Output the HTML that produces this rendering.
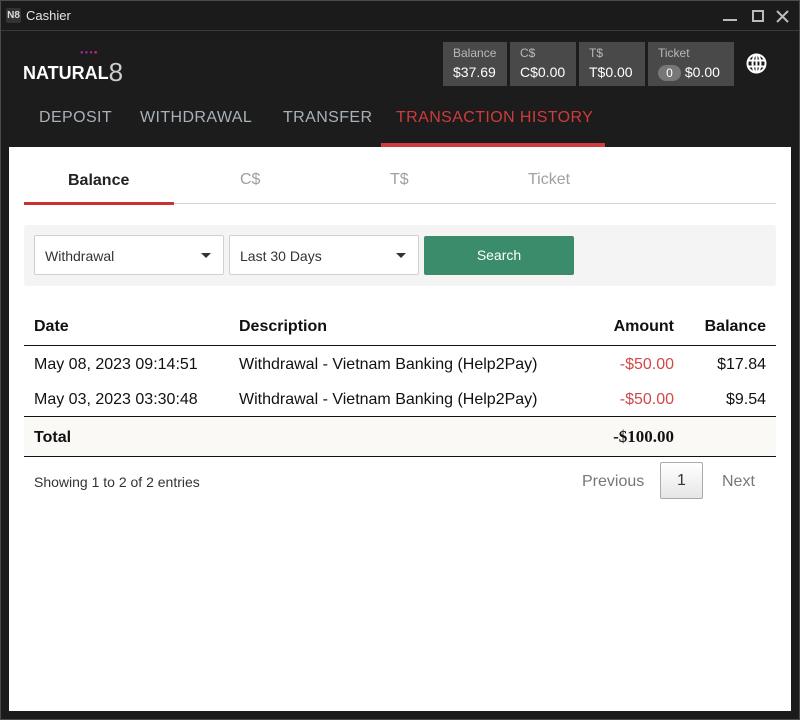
<!DOCTYPE html>
<html><head><style>
*{margin:0;padding:0;box-sizing:border-box}
body{width:800px;height:720px;background:#1b1b1b;font-family:"Liberation Sans",sans-serif;position:relative;overflow:hidden}
.a{position:absolute}
.frame{left:0;top:0;width:800px;height:720px;border:1px solid #4a4a4a}
.tb{left:1px;top:1px;width:798px;height:30px;background:#1b1b1b;border-bottom:1px solid #3a3a3a}
.tab{top:109px;font-size:16px;color:#a9b1b8;letter-spacing:.4px}
.box{top:42px;height:44px;background:#494949;color:#fff}
.box .l{position:absolute;left:10px;top:4px;font-size:12px;color:#b8b8b8}
.box .v{position:absolute;left:10px;top:22px;font-size:14px}
.white{left:9px;top:147px;width:782px;height:564px;background:#fff}
.st{top:171px;font-size:16px;color:#a0a0a0}
.td{font-size:16px;color:#111}
.th{font-size:16px;color:#111;font-weight:bold}
</style></head><body>
<div class="a frame"></div>
<div class="a tb"></div>
<div class="a" style="left:6px;top:8px;width:15px;height:15px;background:#333;border-radius:2px;color:#ddd;font-size:10px;font-weight:bold;line-height:15px;text-align:center">N8</div>
<div class="a" style="left:26px;top:8px;color:#e6e6e6;font-size:13px">Cashier</div>
<div class="a" style="left:723px;top:19px;width:14px;height:2px;background:#bbb"></div>
<div class="a" style="left:752px;top:10px;width:12px;height:12px;border:2px solid #bbb"></div>
<svg class="a" style="left:776px;top:10px" width="13" height="13" stroke="#bbb" stroke-width="2"><path d="M1 1L12 12M12 1L1 12"/></svg>
<div class="a" style="left:9px;top:38px;width:782px;height:109px;background:#1c1c1c"></div>
<div class="a" style="left:23px;top:55px;color:#fff;font-size:18px;font-weight:bold;letter-spacing:0px;transform:scaleX(1.0);transform-origin:left">NATURAL<span style="font-size:26px;font-weight:normal;color:#ccc;position:relative;top:2px">8</span></div>
<div class="a" style="left:80px;top:50px;color:#a0279a;font-size:6px;letter-spacing:1px">●●●<span style="color:#e0266a">●</span></div>
<div class="a box" style="left:443px;width:64px"><span class="l">Balance</span><span class="v">$37.69</span></div>
<div class="a box" style="left:510px;width:66px"><span class="l">C$</span><span class="v">C$0.00</span></div>
<div class="a box" style="left:579px;width:66px"><span class="l">T$</span><span class="v">T$0.00</span></div>
<div class="a box" style="left:648px;width:86px"><span class="l">Ticket</span><span class="v"><span style="display:inline-block;background:#777;border-radius:9px;width:23px;height:16px;text-align:center;font-size:12px;line-height:16px">0</span> $0.00</span></div>
<svg class="a" style="left:746px;top:53px" width="21" height="21" viewBox="0 0 21 21" fill="none" stroke="#fff" stroke-width="2"><circle cx="10.5" cy="10.5" r="9"/><ellipse cx="10.5" cy="10.5" rx="4" ry="9"/><path d="M2 7.5h17M2 13.5h17M10.5 1.5v18"/></svg>
<div class="a tab" style="left:39px">DEPOSIT</div>
<div class="a tab" style="left:140px">WITHDRAWAL</div>
<div class="a tab" style="left:283px">TRANSFER</div>
<div class="a tab" style="left:396px;color:#d03b3b">TRANSACTION HISTORY</div>
<div class="a" style="left:381px;top:143px;width:224px;height:4px;background:#d03b3b"></div>
<div class="a white"></div>
<div class="a st" style="left:68px;top:172px;color:#222;font-weight:bold">Balance</div>
<div class="a st" style="left:240px">C$</div>
<div class="a st" style="left:390px">T$</div>
<div class="a st" style="left:528px">Ticket</div>
<div class="a" style="left:24px;top:203px;width:752px;height:1px;background:#d6d6d6"></div>
<div class="a" style="left:24px;top:202px;width:150px;height:3px;background:#c83232"></div>
<div class="a" style="left:24px;top:225px;width:752px;height:61px;background:#f4f4f4;border-radius:3px"></div>
<div class="a" style="left:34px;top:235px;width:190px;height:40px;background:#fff;border:1px solid #d0d0d0;border-radius:2px;font-size:14px;color:#333;padding:12px 10px">Withdrawal</div>
<div class="a" style="left:201px;top:253px;border:5px solid transparent;border-top:5px solid #333"></div>
<div class="a" style="left:229px;top:235px;width:190px;height:40px;background:#fff;border:1px solid #d0d0d0;border-radius:2px;font-size:14px;color:#333;padding:12px 10px">Last 30 Days</div>
<div class="a" style="left:396px;top:253px;border:5px solid transparent;border-top:5px solid #333"></div>
<div class="a" style="left:424px;top:236px;width:150px;height:39px;background:#3a8c6a;color:#fff;font-size:14px;text-align:center;line-height:39px;border-radius:2px">Search</div>
<div class="a th" style="left:34px;top:318px">Date</div>
<div class="a th" style="left:239px;top:318px">Description</div>
<div class="a th" style="right:126px;top:318px">Amount</div>
<div class="a th" style="right:34px;top:318px">Balance</div>
<div class="a" style="left:24px;top:345px;width:752px;height:1px;background:#111"></div>
<div class="a td" style="left:34px;top:356px">May 08, 2023 09:14:51</div>
<div class="a td" style="left:239px;top:356px">Withdrawal - Vietnam Banking (Help2Pay)</div>
<div class="a td" style="right:126px;top:356px;color:#d04848">-$50.00</div>
<div class="a td" style="right:34px;top:356px">$17.84</div>
<div class="a td" style="left:34px;top:391px">May 03, 2023 03:30:48</div>
<div class="a td" style="left:239px;top:391px">Withdrawal - Vietnam Banking (Help2Pay)</div>
<div class="a td" style="right:126px;top:391px;color:#d04848">-$50.00</div>
<div class="a td" style="right:34px;top:391px">$9.54</div>
<div class="a" style="left:24px;top:416px;width:752px;height:41px;background:#faf9f5;border-top:1px solid #111;border-bottom:1px solid #111"></div>
<div class="a th" style="left:34px;top:429px">Total</div>
<div class="a th" style="right:126px;top:427px;font-family:'Liberation Serif',serif;font-size:17px">-$100.00</div>
<div class="a" style="left:34px;top:474px;font-size:14px;color:#333">Showing 1 to 2 of 2 entries</div>
<div class="a" style="left:582px;top:473px;font-size:16px;color:#777">Previous</div>
<div class="a" style="left:660px;top:462px;width:43px;height:37px;border:1px solid #aaa;border-radius:2px;background:linear-gradient(#fff,#e6e6e6);text-align:center;line-height:35px;font-size:16px;color:#333">1</div>
<div class="a" style="left:722px;top:473px;font-size:16px;color:#777">Next</div>
</body></html>
